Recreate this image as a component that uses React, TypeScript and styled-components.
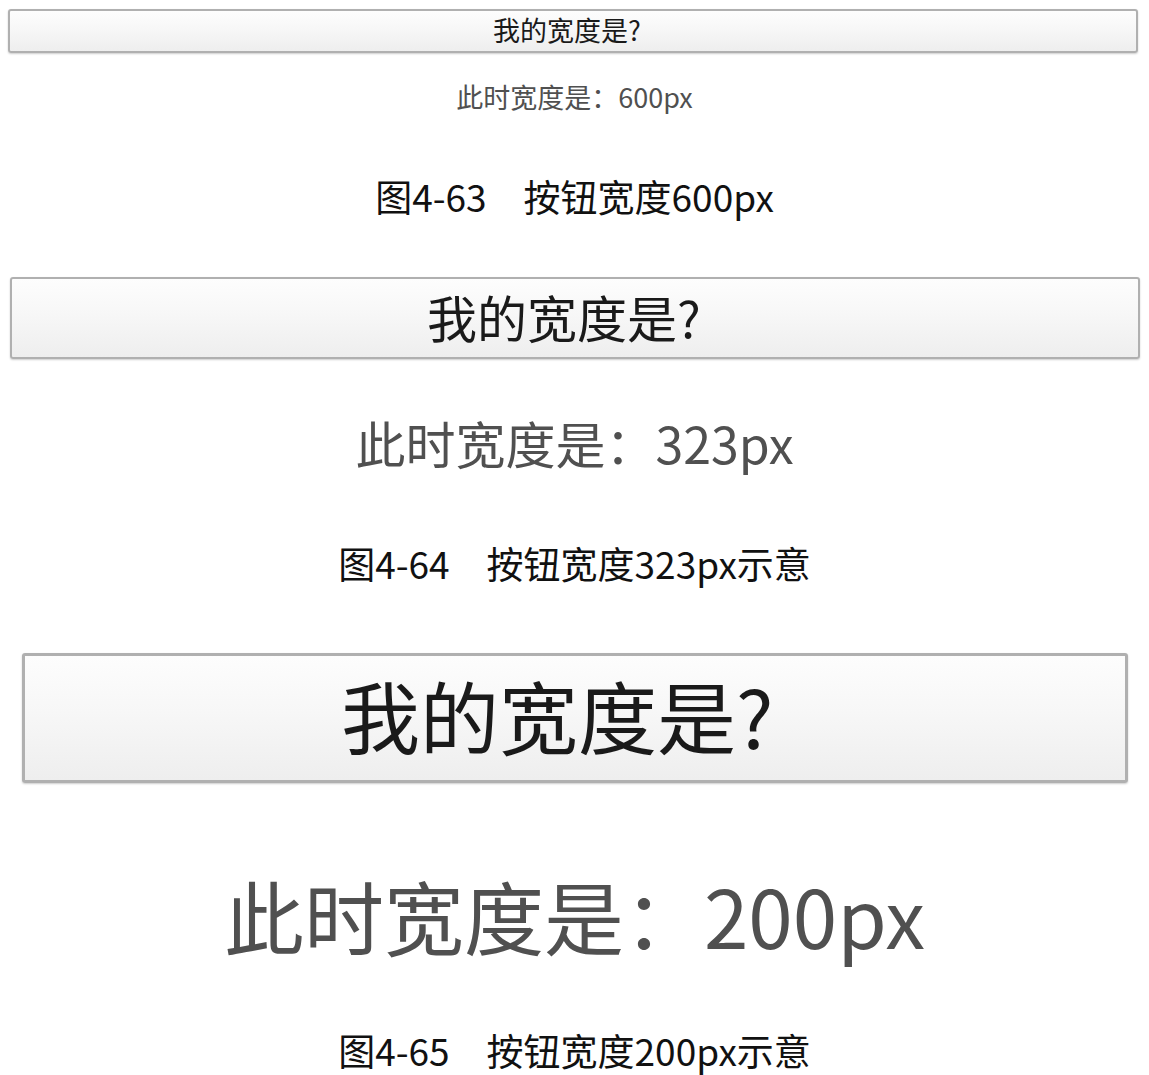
import React from 'react'
import styled, { createGlobalStyle } from 'styled-components'

const GlobalStyle = createGlobalStyle`
    html, body {
        margin: 0;
        padding: 0;
        background: #ffffff;
    }
    body {
        font-family: 'Noto Sans CJK SC', 'Noto Sans', sans-serif;
    }
`

const CJK = `'Noto Sans CJK SC', 'Noto Sans', sans-serif`

interface FigureSpec {
    top: number
    buttonHeight: number
    buttonLeft: number
    buttonRight: number
    border: number
    buttonFont: number
    readoutFont: number
    readoutTop: number
    readoutLine: number
    captionLine: number
    width: number
    caption: string
}

const figures: FigureSpec[] = [
    {
        top: 9,
        buttonHeight: 44,
        buttonLeft: 8,
        buttonRight: 11,
        border: 2,
        buttonFont: 27,
        readoutFont: 27,
        readoutTop: 0,
        readoutLine: 88,
        captionLine: 110,
        width: 600,
        caption: '图4-63　按钮宽度600px',
    },
    {
        top: 26,
        buttonHeight: 82,
        buttonLeft: 10,
        buttonRight: 9,
        border: 2,
        buttonFont: 50,
        readoutFont: 50,
        readoutTop: 0,
        readoutLine: 166,
        captionLine: 76,
        width: 323,
        caption: '图4-64　按钮宽度323px示意',
    },
    {
        top: 52,
        buttonHeight: 130,
        buttonLeft: 22,
        buttonRight: 21,
        border: 3,
        buttonFont: 79,
        readoutFont: 80,
        readoutTop: 34,
        readoutLine: 194,
        captionLine: 78,
        width: 200,
        caption: '图4-65　按钮宽度200px示意',
    },
]

const Page = styled.main`
    display: flex;
    flex-direction: column;
    width: 100%;
`

const Figure = styled.section<{ $top: number }>`
    display: flex;
    flex-direction: column;
    align-items: center;
    margin-top: ${(p) => p.$top}px;
`

const WidthButton = styled.button<{ $h: number; $left: number; $right: number; $border: number; $size: number }>`
    align-self: stretch;
    box-sizing: border-box;
    height: ${(p) => p.$h}px;
    margin: 0 ${(p) => p.$right}px 0 ${(p) => p.$left}px;
    padding: 0 0.45em 0.08em 0;
    border: ${(p) => p.$border}px solid #b0b0b0;
    border-radius: 3px;
    background: linear-gradient(to bottom, #fdfdfd 0%, #f7f7f7 45%, #eeeeee 100%);
    box-shadow: 0 1px 2px rgba(0, 0, 0, 0.2);
    color: #1a1a1a;
    font-family: ${CJK};
    font-size: ${(p) => p.$size}px;
    line-height: 1;
    cursor: pointer;
`

const Readout = styled.p<{ $size: number; $top: number; $line: number }>`
    margin: ${(p) => p.$top}px 0 0;
    font-family: ${CJK};
    font-size: ${(p) => p.$size}px;
    line-height: ${(p) => p.$line}px;
    color: #505050;
    white-space: nowrap;
`

const Caption = styled.p<{ $line: number }>`
    margin: 0;
    font-family: ${CJK};
    font-size: 37px;
    line-height: ${(p) => p.$line}px;
    color: #111111;
    white-space: nowrap;
`

const App = () => {
    return (
        <>
            <GlobalStyle />
            <Page>
                {figures.map((fig, i) => (
                    <Figure key={i} $top={fig.top}>
                        <WidthButton
                            $h={fig.buttonHeight}
                            $left={fig.buttonLeft}
                            $right={fig.buttonRight}
                            $border={fig.border}
                            $size={fig.buttonFont}
                        >
                            我的宽度是?
                        </WidthButton>
                        <Readout $size={fig.readoutFont} $top={fig.readoutTop} $line={fig.readoutLine}>
                            此时宽度是：{fig.width}px
                        </Readout>
                        <Caption $line={fig.captionLine}>{fig.caption}</Caption>
                    </Figure>
                ))}
            </Page>
        </>
    )
}

export default App
